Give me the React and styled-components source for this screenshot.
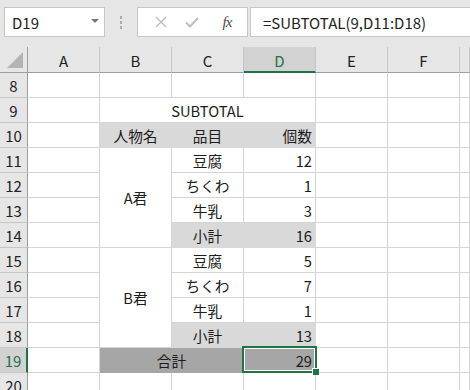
import React from "react";
import styled, { createGlobalStyle } from "styled-components";

const GlobalStyle = createGlobalStyle`
  html, body {
    margin: 0;
    padding: 0;
    background: #ffffff;
  }
  body {
    font-family: "Noto Sans CJK JP", "Noto Sans", sans-serif;
    overflow: hidden;
  }
`;

const FONT = `"Noto Sans CJK JP", "Noto Sans", sans-serif`;
const GRID = "#d4d4d4";
const HEAD_LINE = "#c6c6c6";
const HEAD_EDGE = "#9e9e9e";
const GREEN = "#217346";
const LIGHT = "#d9d9d9";
const DARK = "#a6a6a6";

const Page = styled.div`
  width: 470px;
  height: 390px;
  overflow: hidden;
  background: #ffffff;
`;

const FormulaBar = styled.div`
  height: 47px;
  box-sizing: border-box;
  background: #e6e6e6;
  display: flex;
  align-items: flex-start;
  padding: 7px 0 0 4px;
`;

const NameBox = styled.div`
  width: 101px;
  height: 30px;
  box-sizing: border-box;
  background: #ffffff;
  border: 1px solid ${HEAD_LINE};
  display: flex;
  align-items: center;
  justify-content: space-between;
  padding: 0 5px 0 7px;
  font-family: ${FONT};
  font-size: 15px;
  color: #222;
`;

const Caret = styled.span`
  width: 0;
  height: 0;
  border-left: 4px solid transparent;
  border-right: 4px solid transparent;
  border-top: 4px solid #777;
  margin-bottom: 2px;
`;

const Dots = styled.div`
  width: 32px;
  height: 30px;
  display: flex;
  flex-direction: column;
  align-items: center;
  justify-content: center;
  gap: 2px;

  span {
    width: 2px;
    height: 3px;
    background: #ababab;
  }
`;

const IconBox = styled.div`
  width: 111px;
  height: 30px;
  box-sizing: border-box;
  background: #ffffff;
  border: 1px solid ${HEAD_LINE};
  display: flex;
  align-items: center;
  padding-left: 17px;
`;

const IconSlot = styled.span`
  width: ${(p) => p.$w}px;
  display: flex;
  justify-content: center;
  align-items: center;
`;

const Fx = styled.span`
  font-family: "Liberation Serif", "DejaVu Serif", serif;
  font-style: italic;
  font-size: 15px;
  color: #4a4a4a;
  letter-spacing: -1px;
`;

const FormulaInput = styled.div`
  flex: 1;
  height: 30px;
  margin-left: 2px;
  box-sizing: border-box;
  background: #ffffff;
  border: 1px solid ${HEAD_LINE};
  border-right: none;
  display: flex;
  align-items: center;
  padding-left: 12px;
  font-family: ${FONT};
  font-size: 15px;
  color: #222;
  white-space: nowrap;
`;

const Sheet = styled.div`
  display: grid;
  grid-template-columns: 28px repeat(6, 72px) 1fr;
  grid-template-rows: 26px;
  grid-auto-rows: 25px;
  font-family: ${FONT};
  font-size: 14.7px;
  color: #1c1c1c;
`;

const Corner = styled.div`
  grid-row: 1;
  grid-column: 1;
  box-sizing: border-box;
  background: #e6e6e6;
  border-right: 1px solid ${HEAD_EDGE};
  border-bottom: 1px solid ${HEAD_EDGE};
  display: flex;
  align-items: flex-end;
  justify-content: flex-end;
  padding: 0 4px 4px 0;

  span {
    width: 0;
    height: 0;
    border-left: 16px solid transparent;
    border-bottom: 16px solid #b4b4b4;
  }
`;

const ColHead = styled.div`
  grid-row: 1;
  grid-column: ${(p) => p.$c};
  box-sizing: border-box;
  background: ${(p) => (p.$active ? "#d2d2d2" : "#e6e6e6")};
  color: ${(p) => (p.$active ? GREEN : "#222")};
  border-right: 1px solid ${HEAD_LINE};
  border-bottom: ${(p) => (p.$active ? `2px solid ${GREEN}` : `1px solid ${HEAD_EDGE}`)};
  display: flex;
  align-items: center;
  justify-content: center;
  font-size: 15px;
  padding-top: 2px;
`;

const RowHead = styled.div`
  grid-column: 1;
  grid-row: ${(p) => p.$r};
  box-sizing: border-box;
  background: ${(p) => (p.$active ? "#d2d2d2" : "#e6e6e6")};
  color: ${(p) => (p.$active ? GREEN : "#222")};
  border-right: ${(p) => (p.$active ? `2px solid ${GREEN}` : `1px solid ${HEAD_EDGE}`)};
  border-bottom: 1px solid ${HEAD_LINE};
  display: flex;
  align-items: center;
  justify-content: center;
  font-size: 15px;
`;

const Cell = styled.div`
  grid-row: ${(p) => p.$r} / span ${(p) => p.$rs || 1};
  grid-column: ${(p) => p.$c} / span ${(p) => p.$cs || 1};
  position: relative;
  box-sizing: border-box;
  background: ${(p) => p.$bg || "#ffffff"};
  border-right: 1px solid ${(p) => p.$bg || GRID};
  border-bottom: 1px solid ${(p) => p.$bg || GRID};
  display: flex;
  align-items: center;
  justify-content: ${(p) =>
    p.$align === "right" ? "flex-end" : p.$align === "center" ? "center" : "flex-start"};
  padding: 0 3px;
  white-space: nowrap;
`;

const Selection = styled.div`
  position: absolute;
  left: -2px;
  top: -2px;
  width: 75px;
  height: 27px;
  box-sizing: border-box;
  border: 2px solid ${GREEN};
  box-shadow: inset 0 0 0 1px #ffffff;
  z-index: 2;
  pointer-events: none;

  span {
    position: absolute;
    right: -4px;
    bottom: -4px;
    width: 6px;
    height: 6px;
    background: ${GREEN};
    border-left: 1px solid #fff;
    border-top: 1px solid #fff;
  }
`;

// last column is only a sliver at the right edge, so no letter shown
const columns = ["A", "B", "C", "D", "E", "F", ""];

// sheet rows 8..20 map to grid rows 2..14
const g = (row) => row - 6;

const merged = [
  { r: 9, c: 2, cs: 3, text: "SUBTOTAL", align: "center" },
  { r: 10, c: 2, text: "人物名", align: "center", bg: LIGHT },
  { r: 10, c: 3, text: "品目", align: "center", bg: LIGHT },
  { r: 10, c: 4, text: "個数", align: "right", bg: LIGHT },
  { r: 11, c: 2, rs: 4, text: "A君", align: "center" },
  { r: 15, c: 2, rs: 4, text: "B君", align: "center" },
  { r: 19, c: 2, cs: 2, text: "合計", align: "center", bg: DARK },
  { r: 19, c: 4, text: "29", align: "right", bg: DARK, selected: true },
];

const items = [
  ["豆腐", "12"],
  ["ちくわ", "1"],
  ["牛乳", "3"],
  ["小計", "16", true],
  ["豆腐", "5"],
  ["ちくわ", "7"],
  ["牛乳", "1"],
  ["小計", "13", true],
];

items.forEach(([name, qty, sub], i) => {
  const r = 11 + i;
  merged.push({ r, c: 3, text: name, align: "center", bg: sub ? LIGHT : undefined });
  merged.push({ r, c: 4, text: qty, align: "right", bg: sub ? LIGHT : undefined });
});

const buildCells = () => {
  const taken = new Set();
  merged.forEach((m) => {
    for (let dr = 0; dr < (m.rs || 1); dr++)
      for (let dc = 0; dc < (m.cs || 1); dc++) taken.add(`${m.r + dr}-${m.c + dc}`);
  });
  const blanks = [];
  for (let r = 8; r <= 20; r++) {
    for (let c = 1; c <= 7; c++) {
      if (!taken.has(`${r}-${c}`)) blanks.push({ r, c });
    }
  }
  return [...blanks, ...merged];
};

const XIcon = () => (
  <svg width="12" height="12" viewBox="0 0 12 12">
    <path d="M1 1 L11 11 M11 1 L1 11" stroke="#bdbdbd" strokeWidth="1.4" fill="none" />
  </svg>
);

const CheckIcon = () => (
  <svg width="14" height="11" viewBox="0 0 14 11">
    <path d="M1 5.5 L5 9.5 L13 1" stroke="#bdbdbd" strokeWidth="2" fill="none" />
  </svg>
);

export default function App() {
  const cells = buildCells();
  return (
    <Page>
      <GlobalStyle />
      <FormulaBar>
        <NameBox>
          D19
          <Caret />
        </NameBox>
        <Dots>
          <span />
          <span />
          <span />
        </Dots>
        <IconBox>
          <IconSlot $w={12}>
            <XIcon />
          </IconSlot>
          <IconSlot $w={50}>
            <CheckIcon />
          </IconSlot>
          <IconSlot $w={20}>
            <Fx>fx</Fx>
          </IconSlot>
        </IconBox>
        <FormulaInput>=SUBTOTAL(9,D11:D18)</FormulaInput>
      </FormulaBar>
      <Sheet>
        <Corner>
          <span />
        </Corner>
        {columns.map((col, i) => (
          <ColHead key={i} $c={i + 2} $active={col === "D"}>
            {col}
          </ColHead>
        ))}
        {Array.from({ length: 13 }, (_, i) => 8 + i).map((row) => (
          <RowHead key={row} $r={g(row)} $active={row === 19}>
            {row}
          </RowHead>
        ))}
        {cells.map((cell) => (
          <Cell
            key={`${cell.r}-${cell.c}`}
            $r={g(cell.r)}
            $c={cell.c + 1}
            $rs={cell.rs}
            $cs={cell.cs}
            $bg={cell.bg}
            $align={cell.align}
          >
            {cell.text}
            {cell.selected && (
              <Selection>
                <span />
              </Selection>
            )}
          </Cell>
        ))}
      </Sheet>
    </Page>
  );
}
